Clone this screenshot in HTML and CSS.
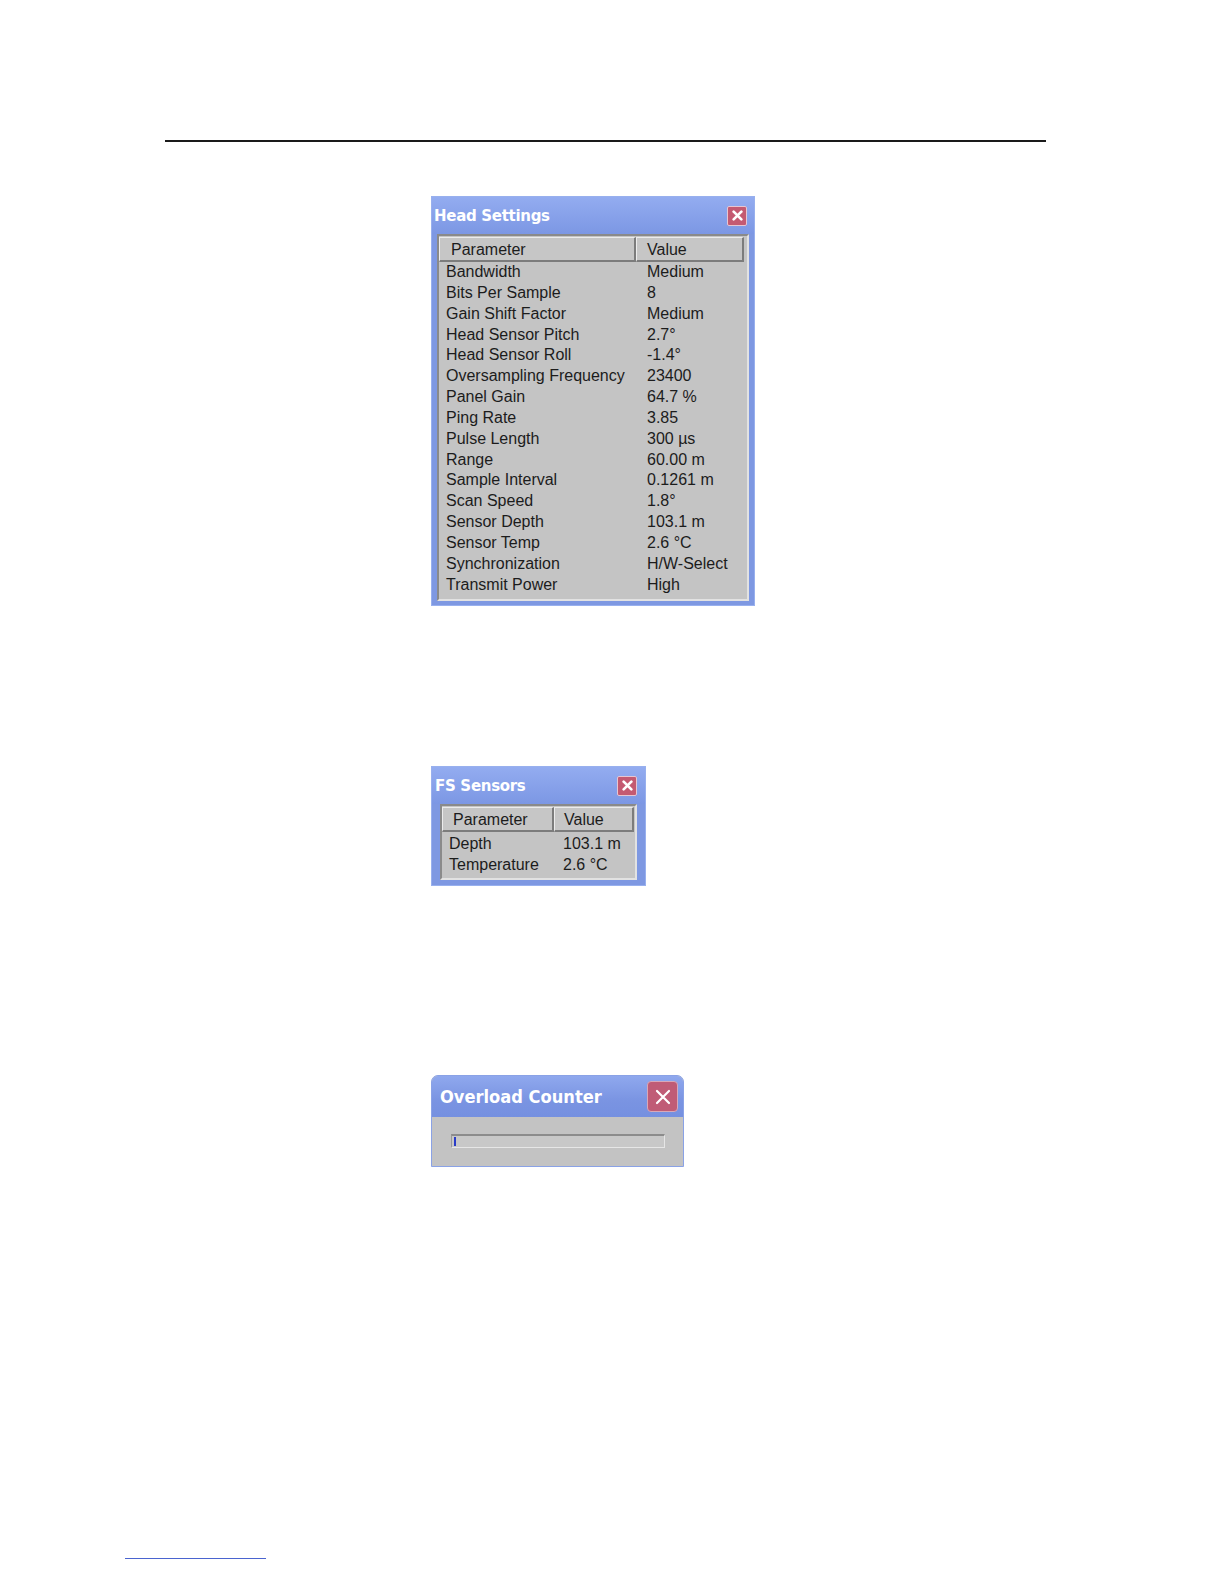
FILE: index.html
```html
<!DOCTYPE html>
<html>
<head>
<meta charset="utf-8">
<link rel="stylesheet" href="styles.css">
</head>
<body>
<div class="page">
  <div class="rule"></div>

  <div class="win win-head">
    <div class="titlebar">
      <span class="title">Head Settings</span>
      <span class="close"><svg viewBox="0 0 10 10" width="11" height="11"><path d="M1.5 1.5 L8.5 8.5 M8.5 1.5 L1.5 8.5" stroke="#fff" stroke-width="2.4" stroke-linecap="round"/></svg></span>
    </div>
    <div class="list">
      <div class="hdr"><div class="hc c1">Parameter</div><div class="hc c2">Value</div><div class="hc c3"></div></div>
      <div class="row"><span class="k">Bandwidth</span><span class="v">Medium</span></div>
      <div class="row"><span class="k">Bits Per Sample</span><span class="v">8</span></div>
      <div class="row"><span class="k">Gain Shift Factor</span><span class="v">Medium</span></div>
      <div class="row"><span class="k">Head Sensor Pitch</span><span class="v">2.7°</span></div>
      <div class="row"><span class="k">Head Sensor Roll</span><span class="v">-1.4°</span></div>
      <div class="row"><span class="k">Oversampling Frequency</span><span class="v">23400</span></div>
      <div class="row"><span class="k">Panel Gain</span><span class="v">64.7 %</span></div>
      <div class="row"><span class="k">Ping Rate</span><span class="v">3.85</span></div>
      <div class="row"><span class="k">Pulse Length</span><span class="v">300 µs</span></div>
      <div class="row"><span class="k">Range</span><span class="v">60.00 m</span></div>
      <div class="row"><span class="k">Sample Interval</span><span class="v">0.1261 m</span></div>
      <div class="row"><span class="k">Scan Speed</span><span class="v">1.8°</span></div>
      <div class="row"><span class="k">Sensor Depth</span><span class="v">103.1 m</span></div>
      <div class="row"><span class="k">Sensor Temp</span><span class="v">2.6 °C</span></div>
      <div class="row"><span class="k">Synchronization</span><span class="v">H/W-Select</span></div>
      <div class="row"><span class="k">Transmit Power</span><span class="v">High</span></div>
    </div>
  </div>

  <div class="win win-fs">
    <div class="titlebar">
      <span class="title">FS Sensors</span>
      <span class="close"><svg viewBox="0 0 10 10" width="11" height="11"><path d="M1.5 1.5 L8.5 8.5 M8.5 1.5 L1.5 8.5" stroke="#fff" stroke-width="2.4" stroke-linecap="round"/></svg></span>
    </div>
    <div class="list">
      <div class="hdr"><div class="hc c1">Parameter</div><div class="hc c2">Value</div></div>
      <div class="row"><span class="k">Depth</span><span class="v">103.1 m</span></div>
      <div class="row"><span class="k">Temperature</span><span class="v">2.6 °C</span></div>
    </div>
  </div>

  <div class="win win-ov">
    <div class="titlebar">
      <span class="title">Overload Counter</span>
      <span class="close"><svg viewBox="0 0 20 20" width="20" height="20"><path d="M4 4 L16 16 M16 4 L4 16" stroke="#fff" stroke-width="2.2" stroke-linecap="round"/></svg></span>
    </div>
    <div class="ov-body">
      <div class="progress"><span class="tick"></span></div>
    </div>
  </div>

  <div class="footline"></div>
</div>
</body>
</html>
```

FILE: styles.css
```css
html, body {
  margin: 0;
  padding: 0;
  background: #ffffff;
}

.page {
  width: 1224px;
  height: 1584px;
  box-sizing: border-box;
  overflow: hidden;
  position: relative;
  padding-top: 140px;
  font-family: "Liberation Sans", Arial, sans-serif;
}

.rule {
  margin-left: 165px;
  width: 881px;
  height: 1.5px;
  background: #1a1a1a;
}

.win {
  margin-left: 431px;
  background: #7e98e2;
  box-sizing: border-box;
  border: 1px solid #98b0ee;
  display: flex;
  flex-direction: column;
}

.win-head {
  margin-top: 54.5px;
  width: 324px;
  height: 410px;
}

.win-fs {
  margin-top: 160px;
  width: 215px;
  height: 120px;
}

.win-ov {
  margin-top: 189px;
  width: 253px;
  height: 92px;
  border-radius: 7px 7px 0 0;
  background: #c3c3c3;
  border: 1px solid #8aa2e6;
}

.titlebar {
  display: flex;
  align-items: center;
  justify-content: space-between;
  background: linear-gradient(#93acf0, #7c97e4);
}

.win-head .titlebar {
  height: 37px;
  padding: 0 7px 0 2px;
}

.win-fs .titlebar {
  height: 37px;
  padding: 0 8px 0 3px;
}

.win-ov .titlebar {
  height: 41px;
  padding: 0 5px 0 8px;
  border-radius: 6px 6px 0 0;
  background: linear-gradient(#8fa8ee 0%, #7a94e2 60%, #7590e0 100%);
}

.title {
  color: #ffffff;
  font-family: "DejaVu Sans", Verdana, sans-serif;
  font-weight: bold;
  font-size: 15px;
  letter-spacing: -0.3px;
}

.win-ov .title {
  font-size: 18.5px;
  letter-spacing: 0;
  transform: scaleX(0.88);
  transform-origin: left center;
}

.close {
  width: 20px;
  height: 20px;
  box-sizing: border-box;
  background: #c45a72;
  border: 1px solid #e6c6d2;
  border-radius: 2px;
  display: flex;
  align-items: center;
  justify-content: center;
}

.win-ov .close {
  width: 31px;
  height: 31px;
  background: #c05c76;
  border: 1px solid #d8a8b8;
  border-radius: 4px;
}

.list {
  flex: 1;
  background: #c4c4c4;
  border-top: 2px solid #8a8a8a;
  border-left: 2px solid #8a8a8a;
  border-right: 2px solid #e2e2e2;
  border-bottom: 2px solid #e2e2e2;
  font-size: 16px;
  color: #1c1c1c;
  padding-top: 1px;
}

.win-head .list {
  margin: 0 5px 4px 5px;
}

.win-fs .list {
  margin: 0 8px 5px 8px;
}

.hdr {
  display: flex;
  height: 25px;
}

.hc {
  box-sizing: border-box;
  height: 25px;
  line-height: 23px;
  background: #c6c6c6;
  border-top: 1px solid #ececec;
  border-left: 1px solid #ececec;
  border-right: 2px solid #7c7c7c;
  border-bottom: 2px solid #7c7c7c;
}

.win-head .hc.c1 { width: 197px; padding-left: 11px; }
.win-head .hc.c2 { width: 108px; padding-left: 10px; }
.win-head .hc.c3 { flex: 1; border: none; background: #c4c4c4; }

.win-fs .hc.c1 { width: 112px; padding-left: 10px; }
.win-fs .hc.c2 { width: 80px; padding-left: 9px; }

.row {
  display: flex;
  height: 20.85px;
  line-height: 20.85px;
  white-space: nowrap;
}

.win-head .row .k { width: 208px; padding-left: 7px; box-sizing: border-box; }

.win-fs .row .k { width: 121px; padding-left: 7px; box-sizing: border-box; }
.win-fs .row { height: 21px; line-height: 21px; }
.win-fs .hdr { margin-bottom: 1px; }

.ov-body {
  flex: 1;
  padding: 17px 18px 0 19px;
  background: #c3c3c3;
}

.progress {
  height: 14px;
  box-sizing: border-box;
  border-top: 2px solid #8c8c8c;
  border-left: 1px solid #9a9a9a;
  border-right: 1px solid #e6e6e6;
  border-bottom: 1px solid #e6e6e6;
  background: #c8c8c8;
  display: flex;
  align-items: center;
  padding-left: 2px;
}

.tick {
  width: 2px;
  height: 9px;
  background: #2a3cc8;
}

.footline {
  position: absolute;
  left: 125px;
  top: 1558px;
  width: 141px;
  height: 1px;
  background: #4a64d0;
}
```
